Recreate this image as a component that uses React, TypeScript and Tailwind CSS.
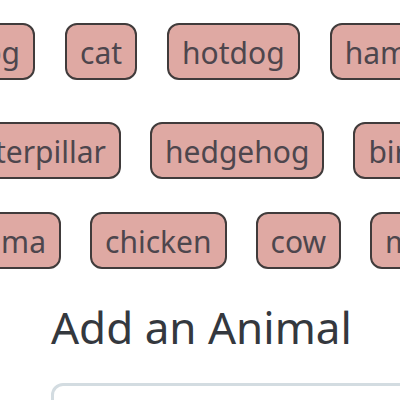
const rows = [
  { lead: "w-[35px]", gap: "gap-[30px]", animals: ["dog", "cat", "hotdog", "hamster"] },
  { lead: "w-[121px]", gap: "gap-[29px]", animals: ["caterpillar", "hedgehog", "bird"] },
  { lead: "w-[61px]", gap: "gap-[29px]", animals: ["llama", "chicken", "cow", "monkey"] },
];

function AnimalButton({ name }: { name: string }) {
  return (
    <button
      type="button"
      className="h-[57px] shrink-0 rounded-xl border-2 border-[#403b3b] bg-[#dfa9a3] px-[13px] pt-[2px] text-[30px] leading-[51px] whitespace-nowrap text-[#4d464d]"
    >
      {name}
    </button>
  );
}

export default function App() {
  return (
    <main className="h-screen overflow-hidden bg-white pt-[23px] font-['Noto_Sans','Open_Sans',sans-serif]">
      <div className="flex flex-col">
        {rows.map(({ lead, gap, animals: [first, ...rest] }, i) => (
          <div key={first} className={`flex ${gap} ${i === 1 ? "mt-[42px] mb-[33px]" : ""}`}>
            <div className={`flex shrink-0 justify-end ${lead}`}>
              <AnimalButton name={first} />
            </div>
            {rest.map((name) => (
              <AnimalButton key={name} name={name} />
            ))}
          </div>
        ))}
      </div>
      <form className="mt-8 pl-[51px]">
        <label htmlFor="animal" className="block text-[44px] leading-[52px] whitespace-nowrap text-[#34383e]">
          Add an Animal
        </label>
        <input
          id="animal"
          type="text"
          className="mt-[30px] -mr-5 block h-[76px] w-[calc(100%+20px)] rounded-xl border-3 border-[#d3dce1] bg-white px-6 text-[30px] outline-none"
        />
      </form>
    </main>
  );
}
